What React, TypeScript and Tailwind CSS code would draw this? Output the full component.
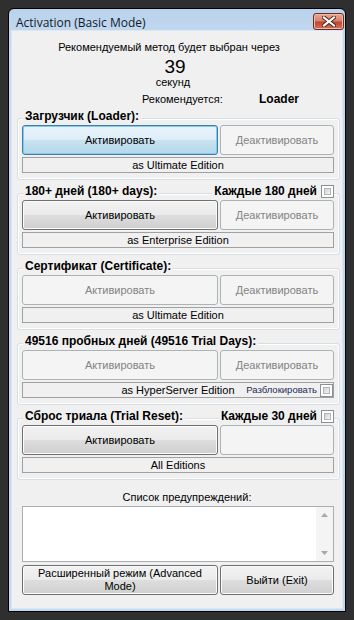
import type { ReactNode } from 'react'

type Variant = 'normal' | 'focus' | 'disabled'

const buttonStyles: Record<Variant, string> = {
  normal:
    'border-[#707070] text-black bg-[linear-gradient(to_bottom,#f2f2f2_0%,#ebebeb_48%,#dddddd_52%,#cfcfcf_100%)] shadow-[inset_0_0_0_1px_#fbfbfb]',
  focus:
    'border-[#3c7fb1] text-black bg-[linear-gradient(to_bottom,#eaf5fc_0%,#dcedf7_48%,#c6e2f0_52%,#b5d8ea_100%)] shadow-[inset_0_0_0_1px_#86c8ec]',
  disabled: 'border-[#adb2b5] text-[#838383] bg-[#f4f4f4]',
}

function WinButton({
  children,
  variant = 'normal',
  className = '',
}: {
  children?: ReactNode
  variant?: Variant
  className?: string
}) {
  return (
    <div
      className={`flex items-center justify-center rounded-[3px] border text-center text-[11px] leading-[13px] ${buttonStyles[variant]} ${className}`}
    >
      {children}
    </div>
  )
}

function CheckBox() {
  return (
    <div className="h-[13px] w-[13px] shrink-0 border border-[#8e8f8f] bg-white p-[2px]">
      <div className="h-full w-full border border-[#b2b6bc] bg-[linear-gradient(135deg,#cfd2d7,#f4f4f4)]" />
    </div>
  )
}

function GroupBox({
  title,
  right,
  activate,
  deactivate,
  deactivateLabel = 'Деактивировать',
  edition,
  unlock,
  className = '',
}: {
  title: string
  right?: string
  activate: Variant
  deactivate: Variant
  deactivateLabel?: string
  edition: string
  unlock?: boolean
  className?: string
}) {
  return (
    <div
      className={`ml-[5px] w-[323px] rounded-[3px] border border-[#d5dfe5] pb-[6px] pl-[4px] pr-[5px] shadow-[inset_0_0_0_1px_#ffffff] ${className}`}
    >
      <div className="-mt-[10px] ml-[1px] flex h-[14px] items-center justify-between">
        <span className="bg-[#f0f0f0] px-[2px] text-[12px] font-bold leading-[14px] text-black">
          {title}
        </span>
        {right && (
          <span className="flex items-center gap-[4px] bg-[#f0f0f0] pl-[2px] text-[12px] font-bold leading-[14px] text-black">
            {right}
            <CheckBox />
          </span>
        )}
      </div>
      <div className="mt-[2px] flex h-[30px] gap-[2px]">
        <WinButton variant={activate} className="w-[196px]">
          Активировать
        </WinButton>
        <WinButton variant={deactivate} className="w-[114px]">
          {deactivateLabel}
        </WinButton>
      </div>
      <div className="relative mt-[2px] flex h-[16px] w-[312px] items-center justify-center border border-[#a0a0a0] text-[11px] leading-[14px] text-black">
        {edition}
        {unlock && (
          <div className="absolute right-0 top-0 flex h-full items-center gap-[3px] bg-[#f0f0f0] pl-[2px] text-[9.5px] text-[#1c2a55]">
            Разблокировать
            <CheckBox />
          </div>
        )}
      </div>
    </div>
  )
}

export default function App() {
  return (
    <div className="h-[620px] w-[354px] bg-[#2f2f2f] p-[8px] font-['Liberation_Sans',Arial,sans-serif]">
      <div className="flex h-[604px] w-[338px] flex-col rounded-t-[6px] border border-black bg-[linear-gradient(to_bottom,#bad2ec,#c6dbf0_40px,#c3d9ef)]">
        <div className="flex h-[22px] items-start justify-between">
          <span className="pl-[7px] pt-[6px] font-['Open_Sans','Liberation_Sans',sans-serif] text-[12px] leading-[15px] text-[#101c2c]">
            Activation (Basic Mode)
          </span>
          <div className="mr-[1px] mt-[4px] flex h-[17px] w-[31px] items-center justify-center rounded-[3px] border border-[#6e2a1f] bg-[linear-gradient(to_bottom,#e9a996_0%,#d8826c_45%,#c0452e_55%,#d2765f_100%)] shadow-[inset_0_0_0_1px_#f0b8a8]">
            <svg width="14" height="11" viewBox="0 0 14 11">
              <path
                d="M2 1.5 L12 9.5 M12 1.5 L2 9.5"
                stroke="#4a2018"
                strokeWidth="4"
                strokeLinecap="square"
              />
              <path
                d="M2 1.5 L12 9.5 M12 1.5 L2 9.5"
                stroke="#ffffff"
                strokeWidth="2.2"
                strokeLinecap="square"
              />
            </svg>
          </div>
        </div>

        <div className="mx-[3px] mb-[3px] flex flex-1 flex-col bg-[#f0f0f0] pt-[9px] text-black shadow-[0_0_0_1px_#dbe7f4]">
          <div className="flex h-[14px] justify-center pr-[16px] text-[11px] leading-[14px]">
            Рекомендуемый метод будет выбран через
          </div>
          <div className="mt-[2px] flex h-[22px] justify-center pr-[4px] text-[19px] leading-[22px]">
            39
          </div>
          <div className="-mt-[2px] flex h-[12px] justify-center pr-[8px] text-[11px] leading-[12px]">
            секунд
          </div>
          <div className="mt-[4px] flex h-[14px] items-center pl-[130px] text-[11px] leading-[14px]">
            <span className="w-[117px]">Рекомендуется:</span>
            <span className="text-[12px] font-bold">Loader</span>
          </div>

          <GroupBox
            className="mt-[12px]"
            title="Загрузчик (Loader):"
            activate="focus"
            deactivate="disabled"
            edition="as Ultimate Edition"
          />
          <GroupBox
            className="mt-[13px]"
            title="180+ дней (180+ days):"
            right="Каждые 180 дней"
            activate="normal"
            deactivate="disabled"
            edition="as Enterprise Edition"
          />
          <GroupBox
            className="mt-[13px]"
            title="Сертификат (Certificate):"
            activate="disabled"
            deactivate="disabled"
            edition="as Ultimate Edition"
          />
          <GroupBox
            className="mt-[13px]"
            title="49516 пробных дней (49516 Trial Days):"
            activate="disabled"
            deactivate="disabled"
            edition="as HyperServer Edition"
            unlock
          />
          <GroupBox
            className="mt-[13px]"
            title="Сброс триала (Trial Reset):"
            right="Каждые 30 дней"
            activate="normal"
            deactivate="disabled"
            deactivateLabel=""
            edition="All Editions"
          />

          <div className="mt-[10px] flex h-[14px] justify-center pl-[20px] text-[11px] leading-[14px]">
            Список предупреждений:
          </div>
          <div className="ml-[10px] mt-[2px] flex h-[56px] w-[312px] border border-[#abadb3] bg-white">
            <div className="flex-1" />
            <div className="flex w-[17px] flex-col items-center justify-between bg-[#f4f4f4] py-[6px]">
              <svg width="7" height="4" viewBox="0 0 7 4">
                <path d="M0 4 L3.5 0 L7 4 Z" fill="#a8a8a8" />
              </svg>
              <svg width="7" height="4" viewBox="0 0 7 4">
                <path d="M0 0 L3.5 4 L7 0 Z" fill="#a8a8a8" />
              </svg>
            </div>
          </div>
          <div className="ml-[10px] mt-[3px] flex h-[30px] w-[312px] gap-[2px]">
            <WinButton className="w-[196px] px-[10px]">Расширенный режим (Advanced Mode)</WinButton>
            <WinButton className="w-[114px]">Выйти (Exit)</WinButton>
          </div>
        </div>
      </div>
    </div>
  )
}
